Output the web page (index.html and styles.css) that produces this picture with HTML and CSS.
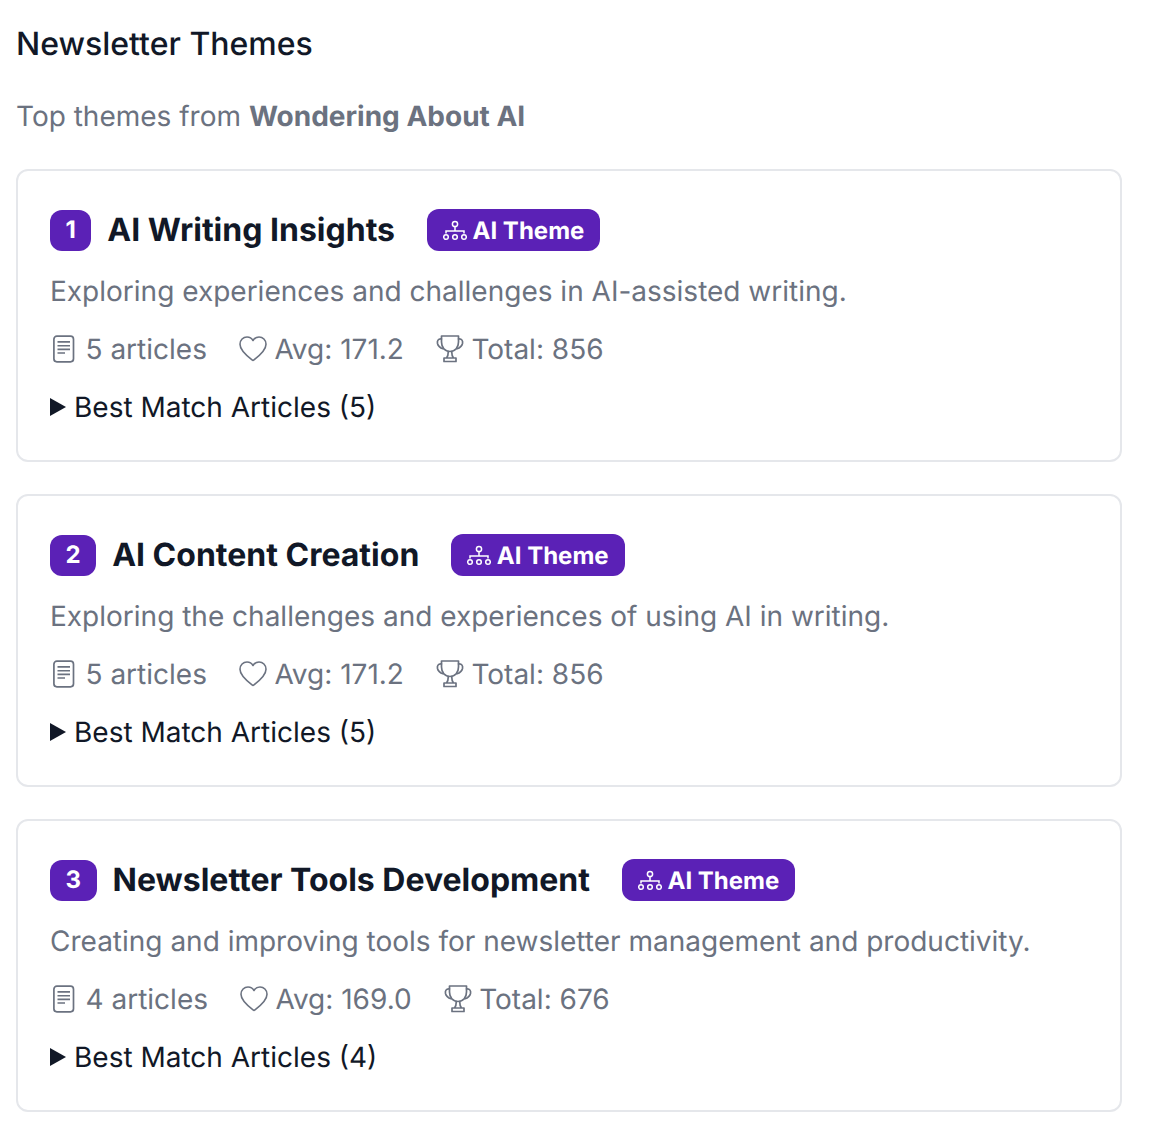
FILE: index.html
```html
<!DOCTYPE html>
<html lang="en">
<head>
<meta charset="utf-8">
<title>Newsletter Themes</title>
<link rel="stylesheet" href="styles.css">
</head>
<body>
<svg class="defs" width="0" height="0" aria-hidden="true">
  <symbol id="i-doc" viewBox="0 0 28 28" fill="none" stroke="currentColor">
    <rect x="3.900" y="1.200" width="19.600" height="25.600" rx="3" stroke-width="1.700"/>
    <path d="M7.500 6.900h12.500M7.500 10.700h12.500M7.500 14.400h12.500M7.500 18h7.500" stroke-width="1.600"/>
  </symbol>
  <symbol id="i-heart" viewBox="0 0 28 28" fill="none" stroke="currentColor">
    <path d="M14 25.500C10 22.300 1 16.300 1 9.200 1 5 4.200 2 8 2c2.600 0 4.800 1.300 6 3.500C15.200 3.300 17.400 2 20 2c3.800 0 7 3 7 7.200 0 7.100-9 13.100-13 16.300z" stroke-width="1.600" stroke-linejoin="round"/>
  </symbol>
  <symbol id="i-trophy" viewBox="0 0 28 28" fill="none" stroke="currentColor" stroke-width="1.700" stroke-linejoin="round" stroke-linecap="round">
    <path d="M5.500 1h17v6c0 5.500-3.300 9.500-8.500 9.500S5.500 12.500 5.500 7z"/>
    <path d="M5.500 4C2 3.500 1 6 1.500 8.500c.6 2.500 2.500 4.300 5.500 5.300M22.500 4c3.500-.5 4.500 2 4 4.500-.6 2.500-2.500 4.300-5.500 5.300"/>
    <path d="M12.300 16.500c0 3-.6 5-1.800 6.500h7c-1.200-1.500-1.800-3.500-1.800-6.500M8 26.500h12V23H8z"/>
  </symbol>
  <symbol id="i-tree" viewBox="0 0 24 24" fill="none" stroke="currentColor" stroke-width="1.500">
    <circle cx="12" cy="6" r="2.600"/>
    <path d="M12 8.600V13M3 15.500V13h18v2.500"/>
    <circle cx="3" cy="19" r="2.300"/><circle cx="12" cy="19" r="2.300"/><circle cx="21" cy="19" r="2.300"/>
  </symbol>
</svg>
<main class="page">
  <h1 class="page-title">Newsletter Themes</h1>
  <p class="page-sub">Top themes from <strong>Wondering About AI</strong></p>

  <section class="card">
    <div class="card-head">
      <span class="rank">1</span>
      <h2 class="card-title">AI Writing Insights</h2>
      <span class="tag"><svg class="tag-icon"><use href="#i-tree"/></svg>AI Theme</span>
    </div>
    <p class="card-desc">Exploring experiences and challenges in AI-assisted writing.</p>
    <div class="stats">
      <span class="stat"><svg class="stat-icon"><use href="#i-doc"/></svg>5 articles</span>
      <span class="stat"><svg class="stat-icon"><use href="#i-heart"/></svg>Avg: 171.2</span>
      <span class="stat"><svg class="stat-icon"><use href="#i-trophy"/></svg>Total: 856</span>
    </div>
    <details class="more"><summary>Best Match Articles (5)</summary></details>
  </section>

  <section class="card">
    <div class="card-head">
      <span class="rank">2</span>
      <h2 class="card-title">AI Content Creation</h2>
      <span class="tag"><svg class="tag-icon"><use href="#i-tree"/></svg>AI Theme</span>
    </div>
    <p class="card-desc">Exploring the challenges and experiences of using AI in writing.</p>
    <div class="stats">
      <span class="stat"><svg class="stat-icon"><use href="#i-doc"/></svg>5 articles</span>
      <span class="stat"><svg class="stat-icon"><use href="#i-heart"/></svg>Avg: 171.2</span>
      <span class="stat"><svg class="stat-icon"><use href="#i-trophy"/></svg>Total: 856</span>
    </div>
    <details class="more"><summary>Best Match Articles (5)</summary></details>
  </section>

  <section class="card">
    <div class="card-head">
      <span class="rank">3</span>
      <h2 class="card-title">Newsletter Tools Development</h2>
      <span class="tag"><svg class="tag-icon"><use href="#i-tree"/></svg>AI Theme</span>
    </div>
    <p class="card-desc">Creating and improving tools for newsletter management and productivity.</p>
    <div class="stats">
      <span class="stat"><svg class="stat-icon"><use href="#i-doc"/></svg>4 articles</span>
      <span class="stat"><svg class="stat-icon"><use href="#i-heart"/></svg>Avg: 169.0</span>
      <span class="stat"><svg class="stat-icon"><use href="#i-trophy"/></svg>Total: 676</span>
    </div>
    <details class="more"><summary>Best Match Articles (4)</summary></details>
  </section>
</main>
</body>
</html>
```

FILE: styles.css
```css
* { box-sizing: border-box; }
html, body { margin: 0; background: #fff; }
body { font-family: Inter, "Liberation Sans", sans-serif; color: #111827; text-rendering: geometricPrecision; }
.defs { position: absolute; }
.page { padding: 20px 36px 0 16px; }
.page-title { margin: 0; font-size: 32px; line-height: 48px; font-weight: 500; }
.page-sub { margin: 24px 0 29px; font-size: 28px; line-height: 48px; color: #6b7280; }
.page-sub strong { font-weight: 700; }
.card { border: 2px solid #e5e7eb; border-radius: 12px; padding: 32px; height: 293px; margin-bottom: 32px; background: #fff; }
.card-head { display: flex; align-items: center; gap: 16px; height: 51px; padding-top: 3px; margin-bottom: 16px; }
.rank { background: #5b21b6; color: #fff; border-radius: 12px; padding: 0 15.5px; height: 41px; font-size: 24px; font-weight: 700; line-height: 40px; flex: none; }
.card-title { margin: 0 16px 0 0; font-size: 32px; line-height: 48px; font-weight: 700; }
.tag { display: inline-flex; align-items: center; gap: 5.5px; background: #5b21b6; color: #fff; border-radius: 12px; height: 42px; padding: 0 16px; font-size: 24px; font-weight: 700; }
.tag-icon { width: 24px; height: 24px; }
.card-desc { margin: 0 0 16px; font-size: 28px; line-height: 42px; color: #6b7280; }
.stats { display: flex; gap: 32px; font-size: 28px; line-height: 42px; color: #6b7280; margin-bottom: 16px; }
.stat { display: inline-flex; align-items: center; gap: 7.5px; }
.stat-icon { width: 28px; height: 28px; overflow: visible; }
.more { font-size: 28px; line-height: 42px; }
.more summary { display: flex; align-items: center; gap: 8px; list-style: none; }
.more summary::before { content: ""; width: 16px; height: 18px; background: #111827; clip-path: polygon(0 0, 100% 50%, 0 100%); }
```
